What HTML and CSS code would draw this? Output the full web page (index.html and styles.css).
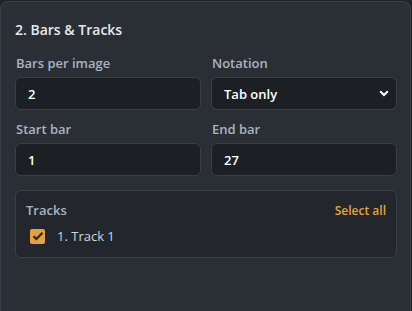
FILE: index.html
```html
<!DOCTYPE html>
<html lang="en">
<head>
  <meta charset="UTF-8">
  <meta name="viewport" content="width=device-width, initial-scale=1.0">
  <title>Bars &amp; Tracks</title>
  <link rel="stylesheet" href="styles.css">
</head>
<body>

  <!-- Painel de compassos e faixas -->
  <div class="panel">
    <h3>2. Bars &amp; Tracks</h3>

    <div class="grid">
      <div class="field">
        <label for="barsPerImage">Bars per image</label>
        <input type="text" id="barsPerImage" value="2">
      </div>
      <div class="field">
        <label for="notation">Notation</label>
        <div class="select">
          <select id="notation">
            <option>Tab only</option>
            <option>Standard + Tab</option>
            <option>Standard only</option>
          </select>
          <svg class="chevron" width="10" height="7" viewBox="0 0 10 7"><path d="M1.2 1.3 5 5 8.8 1.3" fill="none" stroke="#fff" stroke-width="2"/></svg>
        </div>
      </div>
      <div class="field">
        <label for="startBar">Start bar</label>
        <input type="text" id="startBar" value="1">
      </div>
      <div class="field">
        <label for="endBar">End bar</label>
        <input type="text" id="endBar" value="27">
      </div>
    </div>

    <div class="tracks">
      <div class="tracks-head">
        <span class="tracks-title">Tracks</span>
        <a href="#" class="select-all">Select all</a>
      </div>
      <label class="track">
        <span class="check">
          <svg width="12" height="10" viewBox="0 0 12 10"><path d="M1.5 5.2 4.4 8 10.5 1.8" fill="none" stroke="#2b2620" stroke-width="2.2"/></svg>
        </span>
        1. Track 1
      </label>
    </div>
  </div>

</body>
</html>
```

FILE: styles.css
```css
html, body {
  height: 100%;
  overflow: hidden;
}
body {
  margin: 0;
  background: #1f2227;
  font-family: "Open Sans", "Noto Sans", sans-serif;
  color: #e4e7ec;
}
.panel {
  box-sizing: border-box;
  width: 411px;
  height: 310px;
  margin-top: 1px;
  padding: 14px 13px 0 14px;
  background: #2a2e35;
  border: 1px solid #3a3f47;
  border-bottom: none;
  border-radius: 8px 8px 0 0;
}
h3 {
  margin: 4px 0 15px 0;
  font-size: 14px;
  font-weight: 600;
  color: #e6e9ee;
}
.grid {
  display: grid;
  grid-template-columns: 1fr 1fr;
  column-gap: 10px;
  row-gap: 10px;
}
.field label {
  display: block;
  font-size: 13px;
  font-weight: 600;
  color: #aab3c2;
  margin: 0 0 5px 1px;
}
input[type="text"],
select {
  box-sizing: border-box;
  width: 100%;
  height: 33px;
  padding: 0 12px;
  background: #1c1f24;
  border: 1px solid #3a3f47;
  border-radius: 6px;
  color: #ffffff;
  font-family: inherit;
  font-size: 13px;
  font-weight: 600;
  outline: none;
}
.select {
  position: relative;
}
select {
  appearance: none;
  -webkit-appearance: none;
}
.chevron {
  position: absolute;
  right: 8px;
  top: 13px;
  pointer-events: none;
}
.tracks {
  margin-top: 14px;
  height: 68px;
  box-sizing: border-box;
  padding: 10px 10px 10px 10px;
  background: #23272d;
  border: 1px solid #3a3f47;
  border-radius: 6px;
}
.tracks-head {
  display: flex;
  justify-content: space-between;
  align-items: center;
}
.tracks-title {
  font-size: 13px;
  font-weight: 600;
  color: #aab3c2;
}
.select-all {
  font-size: 12px;
  font-weight: 600;
  color: #e9a13b;
  text-decoration: none;
}
.track {
  display: flex;
  align-items: center;
  gap: 12px;
  margin: 8px 0 0 4px;
  font-size: 13px;
  color: #cfd5de;
}
.check {
  display: flex;
  align-items: center;
  justify-content: center;
  width: 15px;
  height: 15px;
  background: #e0a245;
  border-radius: 2px;
}
```
